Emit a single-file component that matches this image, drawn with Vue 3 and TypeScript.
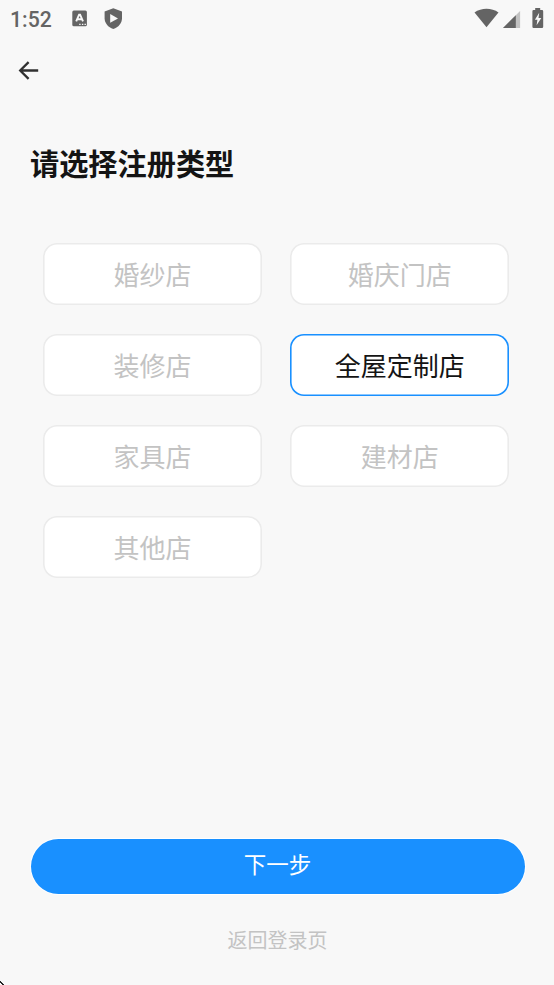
<script setup lang="ts">
import { ref } from 'vue'

const shopTypes: string[] = ['婚纱店', '婚庆门店', '装修店', '全屋定制店', '家具店', '建材店', '其他店']
const selected = ref<string>('全屋定制店')
</script>

<template>
  <main class="screen">
    <header class="status">
      <span class="time">1:52</span>
      <svg class="ic-a" width="16" height="18" viewBox="0 0 16 18">
        <rect x="0.3" y="0.6" width="14.6" height="15.6" rx="1.5" fill="#646464" />
        <path d="M4.2 11.4 7.1 4.6h1l2.900 6.800M5.400 9.200h4.400" fill="none" stroke="#f8f8f8" stroke-width="1.9" />
        <path d="M7.2 14.400h1.400M9.900 14.400h1.400M12.500 14.400h1.400" stroke="#f8f8f8" stroke-width="1.3" />
      </svg>
      <svg class="ic-shield" width="19" height="22" viewBox="0 0 19 22">
        <path d="M9.3 0.2 18 3.4V10.300C18 15.200 14.500 19.400 9.300 21.100 4.100 19.400.6 15.200.6 10.300V3.400Z" fill="#646464" />
        <path d="M6.200 6.100 14 10.400 6.200 14.800Z" fill="#f8f8f8" />
      </svg>
      <span class="spacer"></span>
      <svg class="ic-wifi" width="25" height="20" viewBox="0 0 25 20">
        <path d="M0.500 4.500C7.400-.4 17.600-.4 24.500 4.500L12.500 19.200Z" fill="#646464" />
      </svg>
      <svg class="ic-signal" width="18" height="18" viewBox="0 0 18 18">
        <path d="M17.100 0V17H0Z" fill="#c2c2c2" />
        <path d="M12.800 4.300V17H0Z" fill="#646464" />
      </svg>
      <svg class="ic-battery" width="12" height="21" viewBox="0 0 12 21">
        <path d="M3.200 0h5v2H10q1.200 0 1.200 1.200V18.800q0 1.200-1.200 1.200H1.600Q.4 20 .4 18.800V3.200Q.4 2 1.600 2h1.600Z" fill="#646464" />
        <path d="M7.200 4.800 2.900 11.700h2.500l-.8 5.600L9.300 9.900H6.500Z" fill="#f8f8f8" />
      </svg>
    </header>

    <nav class="nav">
      <button class="back" aria-label="返回">
        <svg width="22" height="20" viewBox="0 0 22 20">
          <path d="M20.200 10.500H2.600M10.600 2.100 2.200 10.500l8.400 8.400" fill="none" stroke="#303030" stroke-width="2.300" />
        </svg>
      </button>
    </nav>

    <h1 class="title">请选择注册类型</h1>

    <section class="grid">
      <button
        v-for="type in shopTypes"
        :key="type"
        class="card"
        :class="{ active: type === selected }"
        @click="selected = type"
      >
        {{ type }}
      </button>
    </section>

    <footer class="footer">
      <button class="next">下一步</button>
      <a class="login">返回登录页</a>
    </footer>
    <svg class="corner" width="4" height="4" viewBox="0 0 4 4" shape-rendering="crispEdges">
      <path d="M0 0h1v1h1v1h1v1h1v1H2V3H1V2H0Z" fill="#222" />
      <path d="M0 2h1v1h1v1H0Z" fill="#fff" />
    </svg>
  </main>
</template>

<style>
body {
  background: #f8f8f8;
  overflow: hidden;
}
</style>

<style scoped>
.screen {
  position: relative;
  box-sizing: border-box;
  width: 100%;
  height: 985px;
  display: flex;
  flex-direction: column;
  background: #f8f8f8;
  font-family: Roboto, 'Noto Sans CJK SC', sans-serif;
}
button {
  font-family: inherit;
  margin: 0;
  padding: 0;
  border: 0;
  background: none;
  cursor: pointer;
}
svg {
  display: block;
  flex: none;
}
.status {
  display: flex;
  align-items: flex-start;
  height: 40px;
  box-sizing: border-box;
  padding: 8px 10px 0;
}
.time {
  width: 62px;
  color: #646464;
  font-size: 21.2px;
  font-weight: 500;
  line-height: 24px;
}
.ic-a {
  margin-top: 2px;
}
.ic-shield {
  margin-left: 16px;
}
.spacer {
  flex: 1;
}
.ic-signal {
  margin: 3px 11px 0 4px;
}
.nav {
  height: 60px;
  display: flex;
  align-items: center;
  padding-left: 18px;
}
.title {
  margin: 44px 0 0 30px;
  color: #141414;
  font-size: 29.2px;
  font-weight: 700;
  line-height: 42px;
}
.grid {
  margin: 57px 44px 0 43px;
  display: grid;
  grid-template-columns: 219px 219.4px;
  column-gap: 28px;
  row-gap: 29px;
}
.card {
  box-sizing: border-box;
  height: 62px;
  border-radius: 14px;
  box-shadow: inset 0 0 0 1.600px #ebebeb;
  background: #fff;
  color: #c3c3c3;
  font-size: 26px;
  line-height: 58px;
  padding-top: 4px;
}
.card.active {
  box-shadow: inset 0 0 0 1.600px #1990ff;
  color: #141414;
}
.footer {
  margin-top: auto;
  display: flex;
  flex-direction: column;
  align-items: center;
  padding: 0 29px 29px 30px;
}
.next {
  width: 494px;
  height: 55px;
  border-radius: 28px;
  background: #1990ff;
  box-shadow: 0 0 0 1px #fff;
  color: #fff;
  font-size: 22.500px;
  line-height: 53px;
  padding-bottom: 2px;
}
.login {
  margin-top: 32px;
  color: #c3c3c3;
  font-size: 20px;
  line-height: 30px;
}
.corner {
  position: absolute;
  left: 0;
  bottom: 0;
}
</style>
